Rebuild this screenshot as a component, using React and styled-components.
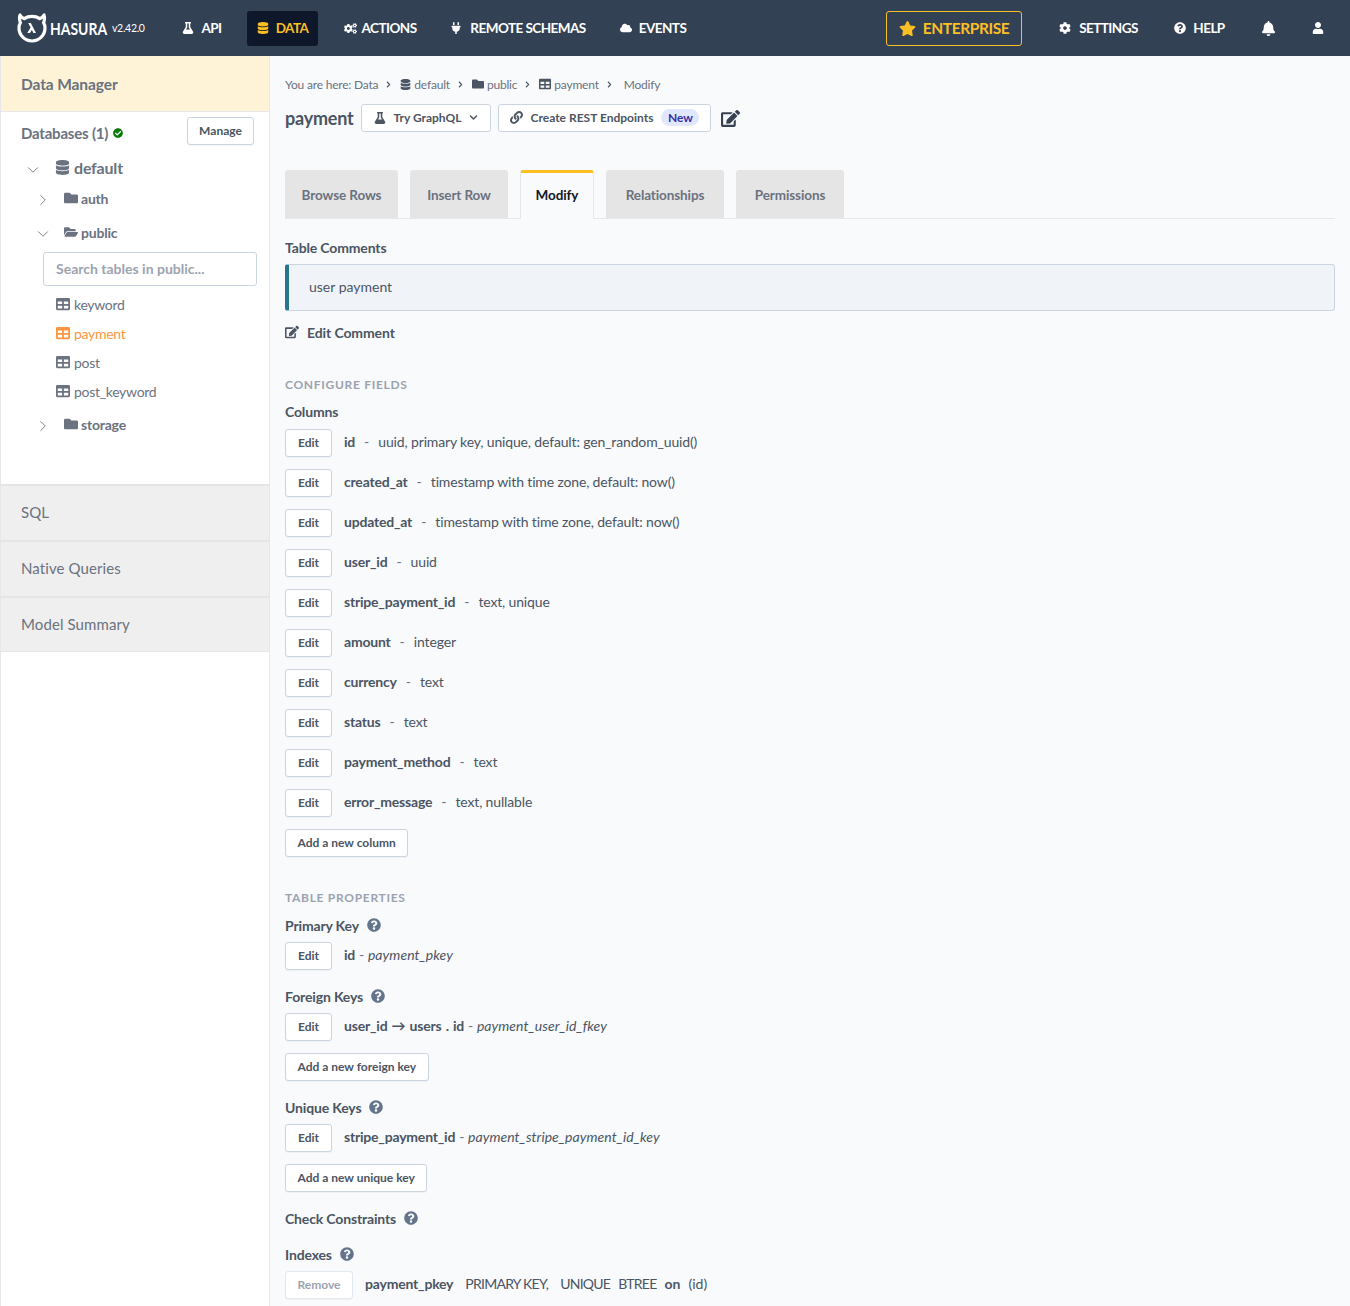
import React from 'react'
import styled, { createGlobalStyle } from 'styled-components'
import { FaFlask, FaDatabase, FaCogs, FaPlug, FaCloud, FaStar, FaCog, FaQuestionCircle, FaBell, FaUser, FaFolder, FaFolderOpen, FaTable, FaLink, FaEdit, FaCheckCircle, FaChevronDown, FaChevronRight } from 'react-icons/fa'
import { ChevronDown, ChevronRight } from 'lucide-react'

const FONT = '"Lato", "Noto Sans", sans-serif'

const columns = [
  ['id', 'uuid, primary key, unique, default: gen_random_uuid()'],
  ['created_at', 'timestamp with time zone, default: now()'],
  ['updated_at', 'timestamp with time zone, default: now()'],
  ['user_id', 'uuid'],
  ['stripe_payment_id', 'text, unique'],
  ['amount', 'integer'],
  ['currency', 'text'],
  ['status', 'text'],
  ['payment_method', 'text'],
  ['error_message', 'text, nullable'],
]

const tables = ['keyword', 'payment', 'post', 'post_keyword']
const tabs = [
  ['Browse Rows', 113],
  ['Insert Row', 98],
  ['Modify', 74],
  ['Relationships', 118],
  ['Permissions', 108],
]

const GlobalStyle = createGlobalStyle`
  html, body { margin: 0; padding: 0; background: #f8fafc; }
  body { font-family: ${FONT}; font-size: 14px; color: #4b5563; }
  * { box-sizing: border-box; }
`

const Logo = () => (
  <svg width="30" height="30" viewBox="0 0 30 30" fill="none">
    <path d="M3 2 C2 6 2.6 8 3.4 9.6 C2.4 11.4 2 13 2 15 C2 22.2 7.8 28 15 28 C22.2 28 28 22.2 28 15 C28 13 27.6 11.4 26.6 9.6 C27.4 8 28 6 27 2 C25.8 4 24.4 5.2 22.6 5.6 C20.6 4.2 18 3.4 15 3.4 C12 3.4 9.4 4.2 7.4 5.6 C5.6 5.2 4.2 4 3 2 Z" fill="none" stroke="#fff" strokeWidth="3.2" strokeLinejoin="round" />
    <path d="M11.2 10 L13.8 10 L19 20 L16.4 20 L14.9 17 L12.9 20 L10.3 20 L13.6 14.6 Z" fill="#fff" />
  </svg>
)

const Page = () => (
  <Shell>
    <GlobalStyle />
    <TopBar>
      <Brand>
        <Logo />
        <BrandName>HASURA</BrandName>
        <Version>v2.42.0</Version>
      </Brand>
      <NavItem $w={58}><FaFlask size={12} />API</NavItem>
      <NavItem $w={71} $active><FaDatabase size={12} />DATA</NavItem>
      <NavItem $w={92} $gap={5}><FaCogs size={13} />ACTIONS</NavItem>
      <NavItem $w={152} $gap={8}><FaPlug size={12} />REMOTE SCHEMAS</NavItem>
      <NavItem $w={86} $gap={7}><FaCloud size={12} />EVENTS</NavItem>
      <Spacer />
      <Enterprise><FaStar size={17} />ENTERPRISE</Enterprise>
      <NavItem $w={99} $gap={8}><FaCog size={12} />SETTINGS</NavItem>
      <NavItem $w={71} $gap={7}><FaQuestionCircle size={12} />HELP</NavItem>
      <IconSlot $w={34}><FaBell size={15} /></IconSlot>
      <IconSlot $w={34}><FaUser size={12} /></IconSlot>
    </TopBar>

    <Body>
      <Sidebar>
        <SideHeader>Data Manager</SideHeader>
        <TreePanel>
          <DbHeader>
            <DbTitle>Databases (1) <FaCheckCircle size={10} color="#047a04" /></DbTitle>
            <ManageButton>Manage</ManageButton>
          </DbHeader>
          <DbRow>
            <ChevronDown size={18} strokeWidth={1} />
            <FaDatabase size={15} />
            default
          </DbRow>
          <SchemaRow $top={12}>
            <ChevronRight size={18} strokeWidth={1} />
            <FaFolder size={14} />
            auth
          </SchemaRow>
          <SchemaRow $top={16}>
            <ChevronDown size={18} strokeWidth={1} />
            <FaFolderOpen size={14} />
            public
          </SchemaRow>
          <SearchBox>Search tables in public...</SearchBox>
          <TableList>
            {tables.map((name) => (
              <TableRow key={name} $active={name === 'payment'}>
                <FaTable size={14} />
                {name}
              </TableRow>
            ))}
          </TableList>
          <SchemaRow $top={14}>
            <ChevronRight size={18} strokeWidth={1} />
            <FaFolder size={14} />
            storage
          </SchemaRow>
        </TreePanel>
        <SideLink>SQL</SideLink>
        <SideLink>Native Queries</SideLink>
        <SideLink>Model Summary</SideLink>
      </Sidebar>

      <Main>
        <Crumbs>
          You are here: Data
          <CrumbArrow><FaChevronRight size={7} /></CrumbArrow>
          <CrumbIcon><FaDatabase size={11} /></CrumbIcon>default
          <CrumbArrow><FaChevronRight size={7} /></CrumbArrow>
          <CrumbIcon><FaFolder size={12} /></CrumbIcon>public
          <CrumbArrow><FaChevronRight size={7} /></CrumbArrow>
          <CrumbIcon><FaTable size={12} /></CrumbIcon>payment
          <CrumbArrow $wide><FaChevronRight size={7} /></CrumbArrow>
          Modify
        </Crumbs>
        <TitleRow>
          <Title>payment</Title>
          <HeadButton $w={130}><FaFlask size={12} /><span>Try GraphQL</span><FaChevronDown size={9} /></HeadButton>
          <HeadButton $w={213}><FaLink size={13} /><span>Create REST Endpoints</span><NewBadge>New</NewBadge></HeadButton>
          <TitleEdit><FaEdit size={19} /></TitleEdit>
        </TitleRow>

        <TabBar>
          {tabs.map(([t, w]) => <Tab key={t} $w={w} $active={t === 'Modify'}>{t}</Tab>)}
        </TabBar>

        <SubHeading $top={19}>Table Comments</SubHeading>
        <CommentBox>user payment</CommentBox>
        <EditComment><FaEdit size={14} />Edit Comment</EditComment>

        <SectionLabel $top={35}>CONFIGURE FIELDS</SectionLabel>
        <SubHeading $top={10}>Columns</SubHeading>
        <ColumnList>
          {columns.map(([name, type]) => (
            <Row key={name}>
              <ActionButton>Edit</ActionButton>
              <ColName>{name}</ColName>
              <Dash>-</Dash>
              <ColType>{type}</ColType>
            </Row>
          ))}
        </ColumnList>
        <AddButton $top={12}>Add a new column</AddButton>

        <SectionLabel $top={32}>TABLE PROPERTIES</SectionLabel>
        <SubHeading $top={11}>Primary Key <FaQuestionCircle size={14} /></SubHeading>
        <KeyRow $top={8}>
          <ActionButton>Edit</ActionButton>
          <ColName>id</ColName>
          <KeyName>- <em>payment_pkey</em></KeyName>
        </KeyRow>

        <SubHeading $top={17}>Foreign Keys <FaQuestionCircle size={14} /></SubHeading>
        <KeyRow $top={8}>
          <ActionButton>Edit</ActionButton>
          <ColName>user_id → users . id</ColName>
          <KeyName>- <em>payment_user_id_fkey</em></KeyName>
        </KeyRow>
        <AddButton $top={12}>Add a new foreign key</AddButton>

        <SubHeading $top={17}>Unique Keys <FaQuestionCircle size={14} /></SubHeading>
        <KeyRow $top={8}>
          <ActionButton>Edit</ActionButton>
          <ColName>stripe_payment_id</ColName>
          <KeyName>- <em>payment_stripe_payment_id_key</em></KeyName>
        </KeyRow>
        <AddButton $top={12}>Add a new unique key</AddButton>

        <SubHeading $top={17}>Check Constraints <FaQuestionCircle size={14} /></SubHeading>
        <SubHeading $top={18}>Indexes <FaQuestionCircle size={14} /></SubHeading>
        <KeyRow $top={8}>
          <RemoveButton>Remove</RemoveButton>
          <ColName>payment_pkey</ColName>
          <IndexText $gap={12} $caps>PRIMARY KEY,</IndexText>
          <IndexText $gap={12} $caps>UNIQUE</IndexText>
          <IndexText $gap={8} $caps>BTREE</IndexText>
          <OnWord>on</OnWord>
          <IndexText $gap={8}>(id)</IndexText>
        </KeyRow>
      </Main>
    </Body>
  </Shell>
)

const Shell = styled.div`
  width: 1350px;
  height: 1306px;
  overflow: hidden;
  display: flex;
  flex-direction: column;
  background: #f8fafc;
`
const TopBar = styled.header`
  flex: none;
  height: 56px;
  padding-right: 15px;
  display: flex;
  align-items: center;
  gap: 16px;
  background: #334155;
  color: #fff;
`
const Brand = styled.div`
  width: 157px;
  padding-left: 17px;
  display: flex;
  align-items: center;
`
const BrandName = styled.span`
  display: inline-block;
  width: 52px;
  margin-left: 3px;
  font-size: 17px;
  font-weight: 700;
  transform: scaleX(0.82);
  transform-origin: left;
`
const Version = styled.span`
  margin-left: 10px;
  font-size: 10.5px;
  letter-spacing: -0.3px;
`
const NavItem = styled.div`
  flex: none;
  width: ${(p) => p.$w}px;
  height: 35px;
  display: flex;
  align-items: center;
  justify-content: center;
  gap: ${(p) => p.$gap || 7}px;
  border-radius: 3px;
  font-size: 13.5px;
  font-weight: 700;
  letter-spacing: -0.55px;
  color: ${(p) => (p.$active ? '#fbbf24' : '#fff')};
  background: ${(p) => (p.$active ? '#0f172a' : 'transparent')};
`
const Spacer = styled.div`
  flex: 1;
`
const Enterprise = styled.div`
  flex: none;
  width: 136px;
  height: 35px;
  margin-right: 11px;
  display: flex;
  align-items: center;
  justify-content: center;
  gap: 7px;
  border: 1px solid #fbbf24;
  border-radius: 3px;
  color: #fbbf24;
  font-size: 15.5px;
  font-weight: 700;
  letter-spacing: -0.4px;
`
const IconSlot = styled.div`
  flex: none;
  width: ${(p) => p.$w}px;
  display: flex;
  justify-content: center;
`
const Body = styled.div`
  flex: 1;
  display: flex;
  min-height: 0;
`
const Sidebar = styled.aside`
  flex: none;
  width: 270px;
  background: #fff;
  border-left: 1px solid #e5e7eb;
  border-right: 1px solid #e5e7eb;
`
const SideHeader = styled.div`
  height: 56px;
  padding: 0 20px;
  display: flex;
  align-items: center;
  background: #fef3d7;
  border-bottom: 1px solid #e5e7eb;
  color: #6b7280;
  font-size: 15.5px;
  font-weight: 700;
  letter-spacing: -0.1px;
`
const TreePanel = styled.div`
  height: 372px;
  padding: 5px 15px 0 0;
  color: #6b7280;
`
const DbHeader = styled.div`
  display: flex;
  align-items: center;
  justify-content: space-between;
  padding-left: 20px;
`
const DbTitle = styled.div`
  display: flex;
  align-items: center;
  gap: 5px;
  padding-top: 4px;
  font-size: 15px;
  font-weight: 700;
  letter-spacing: -0.2px;
  color: #6b7280;
`
const ManageButton = styled.button`
  width: 67px;
  height: 28px;
  padding: 0 0 2px;
  font: 700 12px ${FONT};
  color: #4b5563;
  background: #fff;
  border: 1px solid #cbd5e1;
  border-radius: 3px;
  box-shadow: 0 1px 1px rgba(0, 0, 0, 0.04);
`
const DbRow = styled.div`
  height: 20px;
  margin-top: 12px;
  padding-left: 23px;
  display: flex;
  align-items: center;
  font-size: 16px;
  font-weight: 700;
  letter-spacing: -0.2px;
  svg:first-child { margin-right: 13px; margin-top: 5px; color: #555; flex: none; }
  svg:nth-child(2) { margin-right: 4px; }
`
const SchemaRow = styled.div`
  height: 18px;
  margin-top: ${(p) => p.$top}px;
  padding-left: 33px;
  display: flex;
  align-items: center;
  font-size: 14px;
  font-weight: 700;
  letter-spacing: -0.2px;
  svg:first-child { margin-right: 12px; margin-top: 3px; color: #555; flex: none; }
  svg:nth-child(2) { margin-right: 3px; }
`
const SearchBox = styled.div`
  width: 214px;
  height: 34px;
  margin: 11px 0 0 42px;
  padding: 0 0 2px 12px;
  display: flex;
  align-items: center;
  background: #fff;
  border: 1px solid #cbd5e1;
  border-radius: 3px;
  color: #9ca3af;
  font-size: 14px;
  font-weight: 700;
`
const TableList = styled.div`
  margin-top: 8px;
  padding-left: 55px;
  display: flex;
  flex-direction: column;
  gap: 9px;
`
const TableRow = styled.div`
  height: 20px;
  display: flex;
  align-items: center;
  gap: 4px;
  font-size: 14px;
  letter-spacing: -0.3px;
  color: ${(p) => (p.$active ? '#fd9540' : '#6b7280')};
`
const SideLink = styled.div`
  height: 56px;
  padding: 0 0 3px 20px;
  display: flex;
  align-items: center;
  background: #efefef;
  border-top: 2px solid #e5e5e5;
  color: #6b7280;
  font-size: 15px;
  letter-spacing: 0.1px;
  &:last-child { border-bottom: 1px solid #e5e5e5; padding-bottom: 1px; }
`
const Main = styled.main`
  flex: 1;
  min-width: 0;
  padding: 0 15px;
`
const Crumbs = styled.div`
  height: 16px;
  margin-top: 20px;
  display: flex;
  align-items: center;
  color: #6b7280;
  font-size: 12px;
  letter-spacing: -0.2px;
  white-space: pre;
  svg { color: #4b5563; }
`
const CrumbArrow = styled.span`
  display: inline-flex;
  margin: 0 ${(p) => (p.$wide ? 11 : 8)}px 0 7px;
`
const CrumbIcon = styled.span`
  display: inline-flex;
  margin-right: 3px;
`
const TitleRow = styled.div`
  height: 28px;
  margin-top: 12px;
  display: flex;
  align-items: center;
`
const Title = styled.h2`
  margin: 0 8px 0 0;
  font-size: 18px;
  font-weight: 700;
  color: #4b5563;
  width: 68px;
  white-space: nowrap;
  letter-spacing: -0.2px;
`
const HeadButton = styled.div`
  flex: none;
  width: ${(p) => p.$w}px;
  height: 28px;
  margin-right: 7px;
  padding-bottom: 1px;
  display: flex;
  align-items: center;
  justify-content: center;
  gap: 8px;
  background: #fff;
  border: 1px solid #cbd5e1;
  border-radius: 3px;
  color: #4b5563;
  font-size: 12px;
  font-weight: 700;
`
const NewBadge = styled.span`
  width: 38px;
  height: 17px;
  display: flex;
  align-items: center;
  justify-content: center;
  border-radius: 9px;
  background: #e0e7ff;
  color: #3730a3;
  font-size: 12px;
`
const TitleEdit = styled.div`
  margin-left: 3px;
  display: flex;
  color: #374151;
`
const TabBar = styled.div`
  height: 49px;
  margin-top: 38px;
  display: flex;
  gap: 12px;
  border-bottom: 1px solid #e5e7eb;
`
const Tab = styled.div`
  flex: none;
  width: ${(p) => p.$w}px;
  height: ${(p) => (p.$active ? 49 : 48)}px;
  padding: ${(p) => (p.$active ? '0 0 2px' : '2px 0 0')};
  display: flex;
  align-items: center;
  justify-content: center;
  border-radius: 3px 3px 0 0;
  background: ${(p) => (p.$active ? '#f8fafc' : '#e5e5e5')};
  border: ${(p) => (p.$active ? '1px solid #e5e7eb' : 'none')};
  border-top: ${(p) => (p.$active ? '3px solid #fbbf24' : 'none')};
  border-bottom: ${(p) => (p.$active ? '1px solid #f8fafc' : 'none')};
  color: ${(p) => (p.$active ? '#111827' : '#6b7280')};
  font-size: 13.5px;
  font-weight: 700;
  letter-spacing: -0.1px;
`
const SubHeading = styled.h4`
  margin: ${(p) => p.$top}px 0 0;
  height: 18px;
  display: flex;
  align-items: center;
  gap: 8px;
  color: #4b5563;
  font-size: 14px;
  font-weight: 700;
  letter-spacing: -0.15px;
  svg { color: #64748b; }
`
const CommentBox = styled.div`
  height: 47px;
  margin-top: 8px;
  padding: 0 0 2px 20px;
  display: flex;
  align-items: center;
  background: #f0f4f8;
  border: 1px solid #cbd5e1;
  border-left: 4px solid #297393;
  border-radius: 3px;
  color: #4b5563;
  font-size: 14px;
`
const EditComment = styled.div`
  height: 18px;
  margin-top: 12px;
  display: flex;
  align-items: center;
  gap: 8px;
  color: #4b5563;
  font-size: 14px;
  font-weight: 700;
  letter-spacing: -0.1px;
`
const SectionLabel = styled.div`
  height: 16px;
  margin-top: ${(p) => p.$top}px;
  display: flex;
  align-items: center;
  color: #9ca3af;
  font-size: 12px;
  font-weight: 700;
  letter-spacing: 0.7px;
`
const ColumnList = styled.div`
  margin-top: 9px;
  display: flex;
  flex-direction: column;
  gap: 12px;
`
const Row = styled.div`
  height: 28px;
  display: flex;
  align-items: center;
  font-size: 14px;
  > span { margin-bottom: 4px; }
`
const KeyRow = styled(Row)`
  margin-top: ${(p) => p.$top}px;
`
const ActionButton = styled.button`
  width: 47px;
  height: 28px;
  padding: 0 0 2px;
  margin-right: 12px;
  font: 700 12px ${FONT};
  color: #4b5563;
  background: #fff;
  border: 1px solid #cbd5e1;
  border-radius: 3px;
  box-shadow: 0 1px 1px rgba(0, 0, 0, 0.04);
`
const RemoveButton = styled(ActionButton)`
  width: 68px;
  color: #9ca3af;
  border-color: #e2e8f0;
`
const AddButton = styled(ActionButton)`
  display: block;
  width: fit-content;
  padding: 0 11.5px 2px;
  margin: ${(p) => p.$top}px 0 0;
`
const ColName = styled.span`
  font-weight: 700;
  color: #4b5563;
  white-space: nowrap;
  letter-spacing: -0.2px;
  word-spacing: 1px;
`
const Dash = styled.span`
  margin: 0 9px;
  color: #6b7280;
`
const ColType = styled.span`
  color: #4b5563;
  letter-spacing: -0.15px;
`
const KeyName = styled.span`
  margin-left: 4px;
  color: #6b7280;
  em { color: #4b5563; letter-spacing: 0.05px; }
`
const IndexText = styled.span`
  margin-left: ${(p) => p.$gap}px;
  color: #4b5563;
  letter-spacing: ${(p) => (p.$caps ? '-0.75px' : '0')};
`
const OnWord = styled.span`
  margin-left: 8px;
  font-weight: 700;
  color: #4b5563;
`

export default Page
